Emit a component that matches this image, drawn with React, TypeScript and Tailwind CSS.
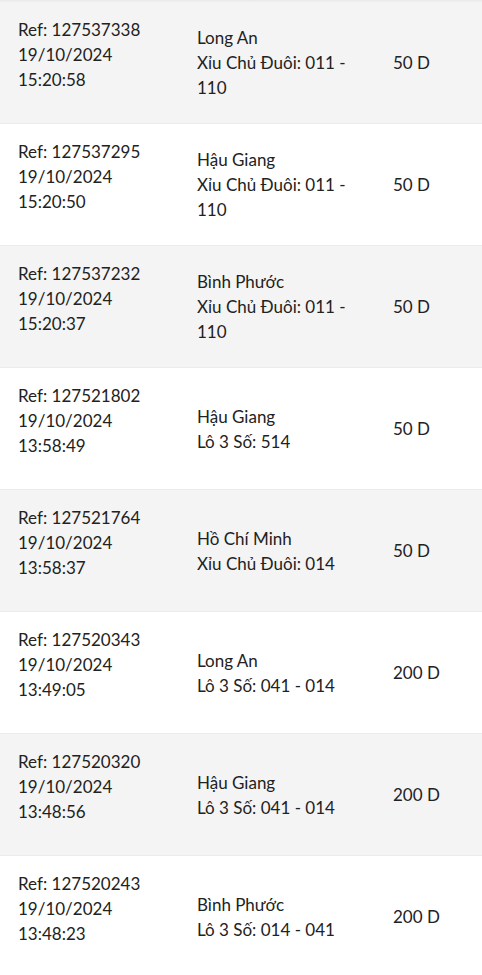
const rows = [
  { ref: '127537338', date: '19/10/2024', time: '15:20:58', place: 'Long An', bet: 'Xỉu Chủ Đuôi: 011 - 110', amount: '50 D' },
  { ref: '127537295', date: '19/10/2024', time: '15:20:50', place: 'Hậu Giang', bet: 'Xỉu Chủ Đuôi: 011 - 110', amount: '50 D' },
  { ref: '127537232', date: '19/10/2024', time: '15:20:37', place: 'Bình Phước', bet: 'Xỉu Chủ Đuôi: 011 - 110', amount: '50 D' },
  { ref: '127521802', date: '19/10/2024', time: '13:58:49', place: 'Hậu Giang', bet: 'Lô 3 Số: 514', amount: '50 D' },
  { ref: '127521764', date: '19/10/2024', time: '13:58:37', place: 'Hồ Chí Minh', bet: 'Xỉu Chủ Đuôi: 014', amount: '50 D' },
  { ref: '127520343', date: '19/10/2024', time: '13:49:05', place: 'Long An', bet: 'Lô 3 Số: 041 - 014', amount: '200 D' },
  { ref: '127520320', date: '19/10/2024', time: '13:48:56', place: 'Hậu Giang', bet: 'Lô 3 Số: 041 - 014', amount: '200 D' },
  { ref: '127520243', date: '19/10/2024', time: '13:48:23', place: 'Bình Phước', bet: 'Lô 3 Số: 014 - 041', amount: '200 D' },
]

export default function App() {
  return (
    <div
      className="w-[482px] min-h-[975px] bg-white text-[17px] leading-[25px] text-[#222]"
      style={{ fontFamily: 'Lato, "Noto Sans", sans-serif' }}
    >
      {/* faint shadow from the header above */}
      <div className="h-[2px] bg-gradient-to-b from-[#e8e8e8] to-[#f1f1f1]" />
      {rows.map((r, i) => (
        <div
          key={r.ref}
          className={`grid grid-cols-[197px_196px_1fr] h-[122px] border-b border-[#ebebeb] ${
            i % 2 === 0 ? 'bg-[#f4f4f4]' : 'bg-white'
          }`}
        >
          <div className="pl-[18px] pt-[15px] self-start">
            <div>Ref: {r.ref}</div>
            <div>{r.date}</div>
            <div>{r.time}</div>
          </div>
          <div className="self-center pr-[26px]">
            <div>{r.place}</div>
            <div>{r.bet}</div>
          </div>
          <div className="self-center">{r.amount}</div>
        </div>
      ))}
    </div>
  )
}
